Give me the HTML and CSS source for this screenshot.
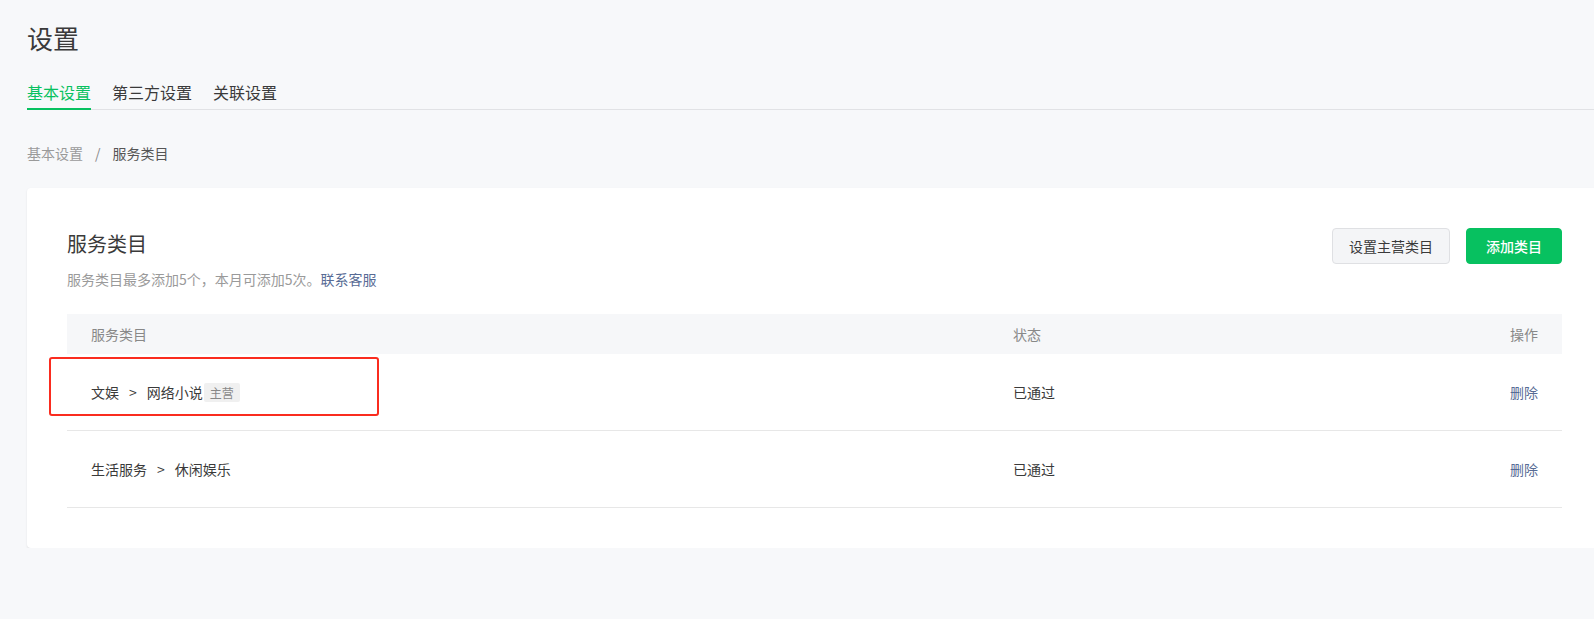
FILE: index.html
```html
<!DOCTYPE html>
<html lang="zh-CN">
<head>
<meta charset="utf-8">
<title>设置</title>
<link rel="stylesheet" href="styles.css">
</head>
<body>
<div class="page">
  <h1 class="page-title">设置</h1>
  <div class="tabs">
    <a class="tab tab-active">基本设置</a>
    <a class="tab">第三方设置</a>
    <a class="tab">关联设置</a>
  </div>
  <div class="breadcrumb">
    <span class="crumb-link">基本设置</span>
    <span class="crumb-sep">/</span>
    <span class="crumb-current">服务类目</span>
  </div>
  <div class="card">
    <div class="card-head">
      <div class="card-info">
        <h2 class="card-title">服务类目</h2>
        <p class="card-desc">服务类目最多添加5个，本月可添加5次。<a class="link">联系客服</a></p>
      </div>
      <div class="actions">
        <button class="btn btn-default">设置主营类目</button>
        <button class="btn btn-primary">添加类目</button>
      </div>
    </div>
    <div class="table">
      <div class="row row-head">
        <div class="cell">服务类目</div>
        <div class="cell">状态</div>
        <div class="cell cell-right">操作</div>
      </div>
      <div class="row row-body row-marked">
        <div class="cell">文娱<span class="arrow">&gt;</span>网络小说<span class="tag">主营</span></div>
        <div class="cell">已通过</div>
        <div class="cell cell-right"><a class="link">删除</a></div>
        <div class="mark"></div>
      </div>
      <div class="row row-body">
        <div class="cell">生活服务<span class="arrow">&gt;</span>休闲娱乐</div>
        <div class="cell">已通过</div>
        <div class="cell cell-right"><a class="link">删除</a></div>
      </div>
    </div>
  </div>
</div>
</body>
</html>
```
FILE: styles.css
```css
html, body {
  margin: 0;
  padding: 0;
}
body {
  background: #f7f8fa;
  font-family: "Noto Sans CJK SC", "Noto Sans", sans-serif;
  color: #3a3a3a;
  overflow: hidden;
}
.page {
  padding: 20px 0 0 27px;
}
.page-title {
  margin: 0;
  font-size: 26px;
  line-height: 36px;
  font-weight: 400;
  color: #3a3a3a;
}
.tabs {
  margin-top: 24px;
  display: flex;
  gap: 21px;
  height: 29px;
  border-bottom: 1px solid #e1e2e5;
}
.tab {
  font-size: 16px;
  line-height: 24px;
  padding-bottom: 4px;
  height: 24px;
  border-bottom: 2px solid transparent;
  color: #3a3a3a;
}
.tab-active {
  color: #07c160;
  border-bottom-color: #07c160;
}
.breadcrumb {
  margin-top: 32px;
  font-size: 14px;
  line-height: 22px;
  display: flex;
}
.crumb-link {
  color: #9a9a9a;
}
.crumb-sep {
  color: #8a8a8a;
  margin: 0 12px;
}
.crumb-current {
  color: #555;
}
.card {
  margin-top: 24px;
  width: 1575px;
  box-sizing: border-box;
  background: #fff;
  border-radius: 4px;
  box-shadow: 0 1px 2px rgba(0, 0, 0, 0.1);
  padding: 40px;
}
.card-head {
  display: flex;
  justify-content: space-between;
  align-items: flex-start;
}
.card-title {
  margin: 2px 0 0;
  font-size: 20px;
  line-height: 28px;
  font-weight: 400;
  color: #3a3a3a;
}
.card-desc {
  margin: 10px 0 0;
  font-size: 14px;
  line-height: 22px;
  color: #9a9a9a;
}
.link {
  color: #576b95;
}
.actions {
  display: flex;
  gap: 16px;
}
.btn {
  font-family: inherit;
  font-size: 14px;
  height: 36px;
  line-height: 34px;
  border-radius: 4px;
  padding: 0 16px;
  box-sizing: border-box;
}
.btn-default {
  background: #f4f5f7;
  border: 1px solid #dfe0e3;
  color: #3a3a3a;
}
.btn-primary {
  background: #07c160;
  border: 1px solid #07c160;
  color: #fff;
  font-weight: 500;
  padding: 0 19px;
}
.table {
  margin-top: 24px;
}
.row {
  display: grid;
  grid-template-columns: 922px 1fr auto;
  padding: 0 24px;
  align-items: center;
  font-size: 14px;
  line-height: 22px;
}
.row-head {
  height: 40px;
  background: #f6f7f9;
  color: #888;
}
.row-body {
  height: 76px;
  border-bottom: 1px solid #e7e7e7;
  color: #3a3a3a;
}
.row-marked {
  position: relative;
}
.cell {
  display: flex;
  align-items: center;
}
.cell-right {
  justify-content: flex-end;
}
.arrow {
  margin: 0 10px;
  color: #3a3a3a;
}
.tag {
  display: inline-block;
  background: #f0f0f0;
  color: #888;
  font-size: 12px;
  line-height: 19px;
  padding: 0 6px;
  border-radius: 2px;
  margin-left: 1px;
}
.mark {
  position: absolute;
  left: -18px;
  top: 3px;
  width: 330px;
  height: 59px;
  box-sizing: border-box;
  border: 2px solid #fa2c1f;
  border-radius: 3px;
}
```
